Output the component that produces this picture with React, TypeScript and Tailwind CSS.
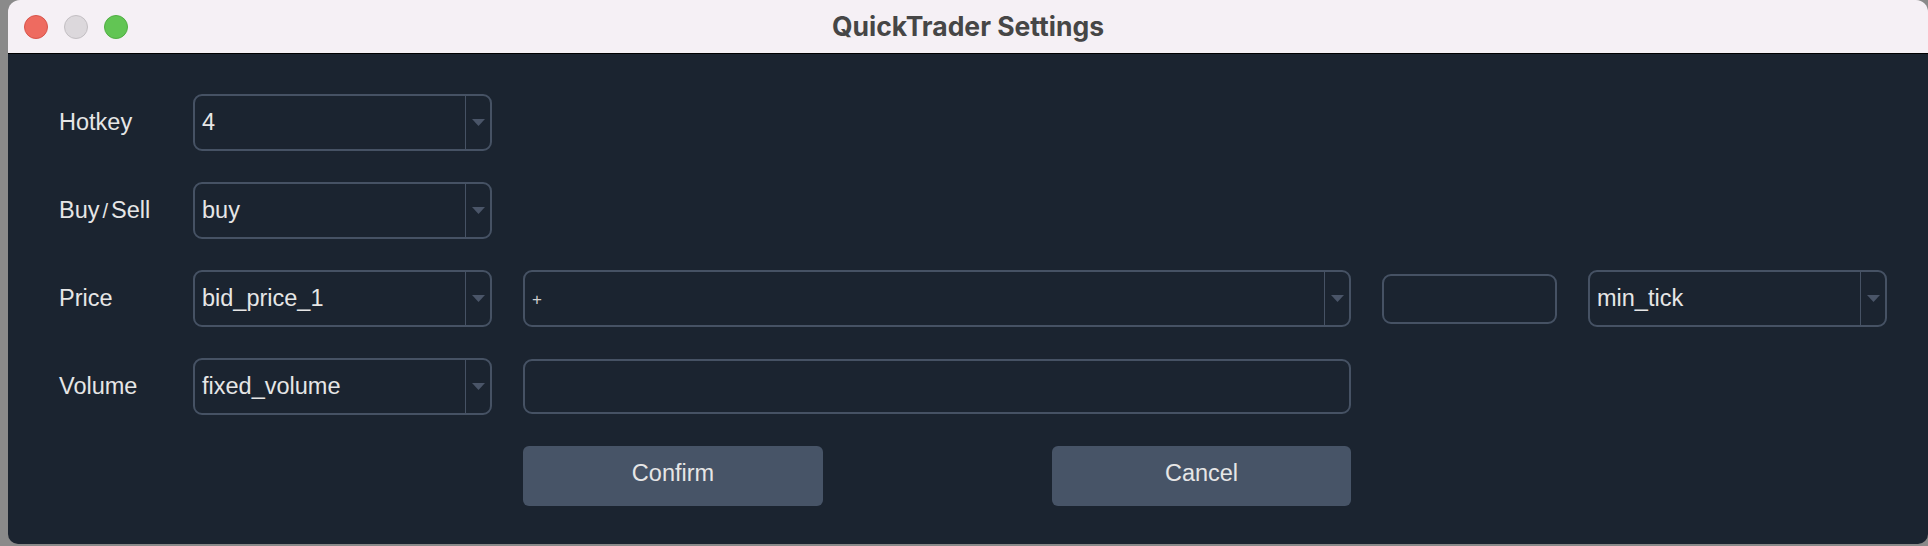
import React from "react";

const Arrow = () => (
  <svg width="13" height="7" viewBox="0 0 13 7" className="block">
    <path d="M0 0 L13 0 L6.5 7 Z" fill="#4a5568" />
  </svg>
);

const Combo = ({ value, width, small }: { value: string; width: string; small?: boolean }) => (
  <div className={`${width} h-[57px] shrink-0 flex border-2 border-[#465264] rounded-[9px] bg-[#1b2430]`}>
    <div className="flex-1 flex items-center pl-[7px] overflow-hidden">
      {small ? (
        <span className="text-[17px] leading-none text-[#d0d0d0] font-['Liberation_Sans',sans-serif] mt-[2px]">{value}</span>
      ) : (
        <span className="text-[23.5px] leading-none text-[#e6e6e6] font-['Liberation_Sans',sans-serif]">{value}</span>
      )}
    </div>
    <div className="w-[25px] border-l-[1.5px] border-[#465264] flex items-center justify-center">
      <Arrow />
    </div>
  </div>
);

const Label = ({ children }: { children: React.ReactNode }) => (
  <div className="w-[134px] shrink-0 text-[23.5px] leading-none text-[#e6e6e6] font-['Liberation_Sans',sans-serif]">
    {children}
  </div>
);

export default function App() {
  return (
    <div className="w-[1928px] h-[546px] bg-[#8a8a8a] overflow-hidden">
      <div className="ml-[8px] w-[1920px] h-[544px] rounded-t-[12px] rounded-b-[10px] overflow-hidden flex flex-col">
        <div className="h-[54px] shrink-0 bg-[#f5f0f5] border-b border-black grid grid-cols-[1fr_auto_1fr] items-center">
          <div className="flex items-center gap-[16px] pl-[16px]">
            <div className="w-[24px] h-[24px] rounded-full bg-[#ee6b60] border border-[#d8544b]" />
            <div className="w-[24px] h-[24px] rounded-full bg-[#dcd8dc] border border-[#c3bfc3]" />
            <div className="w-[24px] h-[24px] rounded-full bg-[#62c554] border border-[#50ae43]" />
          </div>
          <div className="text-[26.5px] leading-none font-bold text-[#464646] font-['Inter',sans-serif] pb-[1px]">
            QuickTrader Settings
          </div>
          <div />
        </div>
        <div className="flex-1 bg-[#1b2430] pt-[40px] pl-[51px] flex flex-col gap-[31px]">
          <div className="flex items-center">
            <Label>Hotkey</Label>
            <Combo value="4" width="w-[299px]" />
          </div>
          <div className="flex items-center">
            <Label>
              Buy<span className="mx-[3px] text-[20px]">/</span>Sell
            </Label>
            <Combo value="buy" width="w-[299px]" />
          </div>
          <div className="flex items-center">
            <Label>Price</Label>
            <Combo value="bid_price_1" width="w-[299px]" />
            <div className="ml-[31px]">
              <Combo value="+" width="w-[828px]" small />
            </div>
            <div className="ml-[31px] w-[175px] h-[50px] border-2 border-[#465264] rounded-[9px]" />
            <div className="ml-[31px]">
              <Combo value="min_tick" width="w-[299px]" />
            </div>
          </div>
          <div className="flex items-center">
            <Label>Volume</Label>
            <Combo value="fixed_volume" width="w-[299px]" />
            <div className="ml-[31px] w-[828px] h-[55px] border-2 border-[#465264] rounded-[9px]" />
          </div>
          <div className="flex items-center pl-[464px]">
            <div className="w-[828px] flex justify-between">
              <button className="w-[300px] h-[60px] rounded-[6px] bg-[#475467] text-[23.5px] text-[#e6e6e6] font-['Liberation_Sans',sans-serif] pb-[5px]">
                Confirm
              </button>
              <button className="w-[299px] h-[60px] rounded-[6px] bg-[#475467] text-[23.5px] text-[#e6e6e6] font-['Liberation_Sans',sans-serif] pb-[5px]">
                Cancel
              </button>
            </div>
          </div>
        </div>
      </div>
    </div>
  );
}
